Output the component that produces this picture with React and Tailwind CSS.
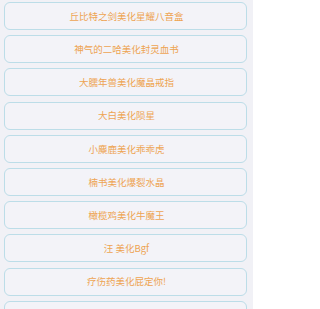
import React from "react";

const items = [
  "丘比特之剑美化星耀八音盒",
  "神气的二哈美化封灵血书",
  "大臑年兽美化魔晶戒指",
  "大白美化陨星",
  "小麋鹿美化乖乖虎",
  "楠书美化爆裂水晶",
  "橄榄鸡美化牛魔王",
  "汪 美化Bgf",
  "疗伤药美化屁定你!",
  "",
];

export default function App() {
  return (
    <div className="flex w-[260px] h-[309px] overflow-hidden bg-white">
      <div className="w-[253px] h-full bg-[#f1f1f6] flex flex-col gap-[5.2px] pt-[2px] pl-[4px] pr-[6px]">
        {items.map((name, i) => (
          <div
            key={i}
            className="shrink-0 h-[28px] flex items-center justify-center rounded-[6px] border border-[#bcdde8] bg-[#f3f3f8] text-[#eea452] text-[9.5px] pl-[2px]"
            style={{ fontFamily: '"Noto Sans CJK SC", "Noto Sans", sans-serif' }}
          >
            {name}
          </div>
        ))}
      </div>
      <div className="flex-1 bg-white" />
    </div>
  );
}
